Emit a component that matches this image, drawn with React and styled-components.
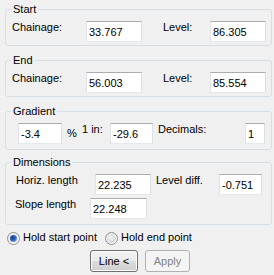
import React, { useId } from "react";
import styled, { createGlobalStyle } from "styled-components";

const GlobalStyle = createGlobalStyle`
  html, body {
    margin: 0;
    background: #f0f0f0;
  }
  body {
    font: 11px/13px "Liberation Sans", Arial, sans-serif;
    color: #000;
  }
`;

const Panel = styled.div`
  width: 274px;
  height: 275px;
  box-sizing: border-box;
  padding: 3px 2px 0 5px;
  overflow: hidden;
`;

const Group = styled.fieldset`
  margin: 0 0 ${(p) => p.$mb ?? 8}px;
  width: 267px;
  min-width: 0;
  box-sizing: border-box;
  border: 1px solid #d5dfe5;
  border-radius: 3px;
  padding: 5px 4px ${(p) => p.$pb ?? 3}px 5px;
  display: flex;
  flex-direction: column;
  gap: 3px;
`;

const Legend = styled.legend`
  padding: 0 2px;
  margin: 0;
  line-height: 13px;
`;

const Row = styled.div`
  display: flex;
  align-items: flex-start;
  height: 21px;
`;

const Label = styled.span`
  flex: none;
  width: ${(p) => p.$w}px;
  margin-left: ${(p) => p.$ml || 0}px;
  margin-top: ${(p) => p.$mt || 0}px;
  white-space: nowrap;
  line-height: 13px;
`;

const Field = styled.input`
  flex: none;
  width: ${(p) => p.$w}px;
  margin: 0 0 0 ${(p) => p.$ml || 0}px;
  height: 21px;
  box-sizing: border-box;
  padding: 3px 2px;
  border: 1px solid;
  border-color: #abadb3 #dbdfe6 #e3e9ef #e2e3ea;
  background: #fff;
  font: inherit;
  line-height: 13px;
  color: #000;
  outline: none;
`;

const RadioRow = styled.div`
  display: flex;
  align-items: flex-start;
  margin: 6px 0 0 2px;
  height: 13px;
`;

const RadioItem = styled.label`
  display: flex;
  align-items: flex-start;
  margin-left: ${(p) => p.$ml || 0}px;
  white-space: nowrap;
  svg {
    flex: none;
    margin: 1px 3px 0 0;
  }
`;

const ButtonRow = styled.div`
  display: flex;
  gap: 7px;
  margin: 6px 0 0 85px;
`;

const Button = styled.button`
  width: ${(p) => p.$w}px;
  height: 22px;
  box-sizing: border-box;
  padding: 0;
  margin: 0;
  border: 1px solid #707070;
  border-radius: 3px;
  background: linear-gradient(#f2f2f2 0%, #ebebeb 50%, #dddddd 51%, #cfcfcf 100%);
  box-shadow: inset 0 0 0 1px #fbfbfb;
  font: inherit;
  color: #000;

  &:disabled {
    border-color: #adb2b5;
    background: #f4f4f4;
    box-shadow: none;
    color: #838383;
  }
`;

function RadioMark({ checked }) {
  const id = useId().replace(/:/g, "");
  return (
    <svg width="13" height="13" viewBox="0 0 13 13">
      <defs>
        <linearGradient id={`o${id}`} x1="0" y1="0" x2="1" y2="1">
          <stop offset="0" stopColor="#e6e6e6" />
          <stop offset="1" stopColor="#ffffff" />
        </linearGradient>
        <radialGradient id={`i${id}`} cx="0.4" cy="0.4" r="0.65">
          {checked ? (
            <>
              <stop offset="0" stopColor="#1b3f88" />
              <stop offset="0.55" stopColor="#2e62bd" />
              <stop offset="1" stopColor="#7fabe6" />
            </>
          ) : (
            <>
              <stop offset="0" stopColor="#f4f4f4" />
              <stop offset="0.7" stopColor="#dcdcdc" />
              <stop offset="1" stopColor="#c6c6c6" />
            </>
          )}
        </radialGradient>
      </defs>
      <circle cx="6.5" cy="6.5" r="6" fill={`url(#o${id})`} stroke="#8e8f8f" />
      <circle cx="6.5" cy="6.5" r={checked ? 3.6 : 4.2} fill={`url(#i${id})`} />
    </svg>
  );
}

export default function App() {
  return (
    <>
      <GlobalStyle />
      <Panel>
        <Group>
          <Legend>Start</Legend>
          <Row>
            <Label $ml={1} $w={74}>Chainage:</Label>
            <Field $w={56} defaultValue="33.767" />
            <Label $ml={21} $w={47}>Level:</Label>
            <Field $w={56} defaultValue="86.305" />
          </Row>
        </Group>

        <Group>
          <Legend>End</Legend>
          <Row>
            <Label $ml={1} $w={74}>Chainage:</Label>
            <Field $w={56} defaultValue="56.003" />
            <Label $ml={21} $w={47}>Level:</Label>
            <Field $w={56} defaultValue="85.554" />
          </Row>
        </Group>

        <Group $pb={5} $mb={6}>
          <Legend>Gradient</Legend>
          <Row>
            <Field $ml={7} $w={44} defaultValue="-3.4" />
            <Label $ml={5} $mt={4} $w={15}>%</Label>
            <Label $w={28}>1 in:</Label>
            <Field $w={43} defaultValue="-29.6" />
            <Label $ml={5} $w={87}>Decimals:</Label>
            <Field $w={20} defaultValue="1" />
          </Row>
        </Group>

        <Group $pb={5} $mb={0}>
          <Legend>Dimensions</Legend>
          <Row>
            <Label $ml={5} $w={79}>Horiz. length</Label>
            <Field $w={56} defaultValue="22.235" />
            <Label $ml={5} $w={63}>Level diff.</Label>
            <Field $w={43} defaultValue="-0.751" />
          </Row>
          <Row>
            <Label $ml={4} $w={75}>Slope length</Label>
            <Field $w={57} defaultValue="22.248" />
          </Row>
        </Group>

        <RadioRow>
          <RadioItem>
            <RadioMark checked />
            Hold start point
          </RadioItem>
          <RadioItem $ml={8}>
            <RadioMark />
            Hold end point
          </RadioItem>
        </RadioRow>

        <ButtonRow>
          <Button $w={48}>Line &lt;</Button>
          <Button $w={45} disabled>Apply</Button>
        </ButtonRow>
      </Panel>
    </>
  );
}
